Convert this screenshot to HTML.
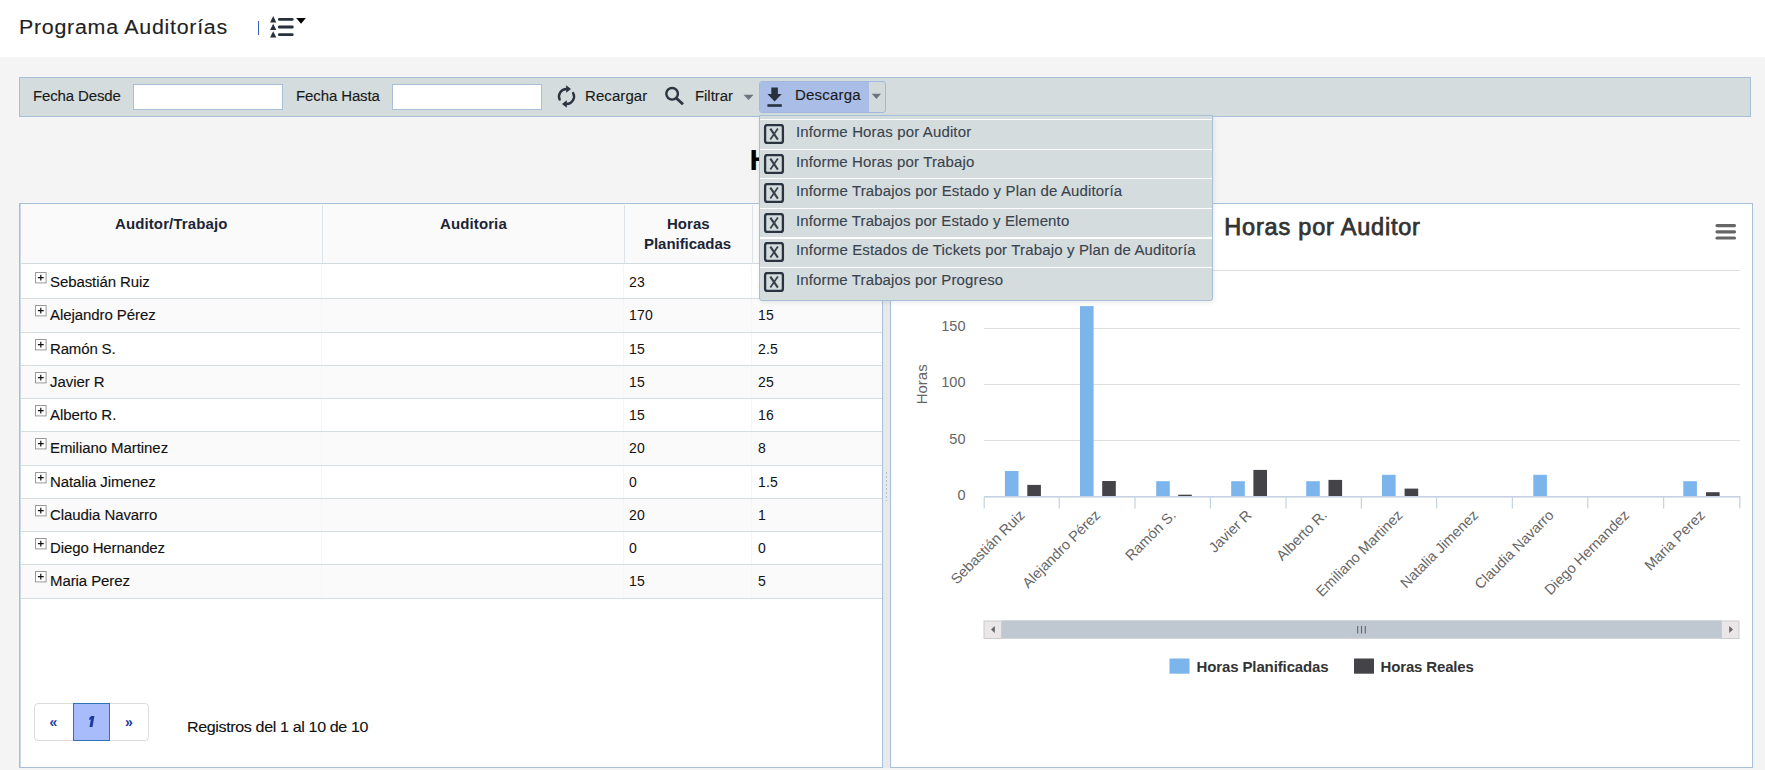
<!DOCTYPE html><html><head><meta charset="utf-8"><title>Programa Auditorías</title><style>
*{box-sizing:border-box}
html,body{margin:0;padding:0}
body{width:1765px;height:770px;overflow:hidden;background:#f4f4f4;font-family:"Liberation Sans", sans-serif;position:relative}
.a{position:absolute;white-space:nowrap}
.t{position:absolute;white-space:nowrap;line-height:1}
</style></head><body>
<div class="a" style="left:0;top:0;width:1765px;height:57px;background:#fff"></div>
<div class="t" style="left:19px;top:16.87px;font-size:20px;color:#222;font-weight:400;letter-spacing:0.681px;transform:scaleX(1.07);transform-origin:0 0;-webkit-text-stroke:0.12px currentColor;">Programa Auditorías</div>
<div class="a" style="left:257.5px;top:21px;width:1.6px;height:14px;background:#3461b8"></div>
<svg class="a" style="left:268px;top:14px" width="40" height="26" viewBox="0 0 40 26">
<g fill="#27313e">
<path d="M2.1 8.5 L5.2 2.1 L8.3 8.5 Z"/><path d="M2.1 16 L5.2 9.7 L8.3 16 Z"/><path d="M2.1 23.6 L5.2 17.3 L8.3 23.6 Z"/>
<rect x="10" y="4.0" width="15.6" height="2.8" rx="1.2"/><rect x="10" y="11.6" width="15.6" height="2.8" rx="1.2"/><rect x="10" y="19.2" width="15.6" height="2.8" rx="1.2"/>
</g><path d="M28.2 4 L37.9 4 L33.05 9.8 Z" fill="#000"/></svg>
<div class="a" style="left:19px;top:77px;width:1732px;height:40px;background:#d4dcdd;border:1px solid #a7c0da"></div>
<div class="t" style="left:33px;top:89.15px;font-size:14px;color:#1a1a1a;font-weight:400;letter-spacing:-0.121px;transform:scaleX(1.07);transform-origin:0 0;-webkit-text-stroke:0.12px currentColor;">Fecha Desde</div>
<div class="a" style="left:133px;top:84px;width:150px;height:26px;background:#fff;border:1px solid #a7c0da"></div>
<div class="t" style="left:296px;top:89.15px;font-size:14px;color:#1a1a1a;font-weight:400;letter-spacing:-0.098px;transform:scaleX(1.07);transform-origin:0 0;-webkit-text-stroke:0.12px currentColor;">Fecha Hasta</div>
<div class="a" style="left:392px;top:84px;width:150px;height:26px;background:#fff;border:1px solid #a7c0da"></div>
<svg class="a" style="left:554px;top:84px" width="26" height="26" viewBox="0 0 26 26">
<g fill="none" stroke="#2b3542" stroke-width="2.4" stroke-linecap="round">
<path d="M5.65 15.55 A7.5 7.5 0 0 1 12.6 5.0"/><path d="M19.12 8.98 A7.5 7.5 0 0 1 12.4 20.0"/></g>
<path d="M12.2 1.3 L17.0 4.9 L12.2 8.7 Z" fill="#2b3542"/><path d="M12.8 16.3 L8.0 20.1 L12.8 23.7 Z" fill="#2b3542"/>
</svg>
<div class="t" style="left:585px;top:89.15px;font-size:14px;color:#1a1a1a;font-weight:400;letter-spacing:0.090px;transform:scaleX(1.07);transform-origin:0 0;-webkit-text-stroke:0.12px currentColor;">Recargar</div>
<svg class="a" style="left:663px;top:85px" width="24" height="24" viewBox="0 0 24 24">
<circle cx="9.1" cy="8.8" r="5.8" fill="none" stroke="#2b3542" stroke-width="2.4"/>
<path d="M13.4 13.2 L20.0 19.3" stroke="#2b3542" stroke-width="2.8" stroke-linecap="butt"/></svg>
<div class="t" style="left:694.5px;top:89.15px;font-size:14px;color:#1a1a1a;font-weight:400;letter-spacing:-0.054px;transform:scaleX(1.07);transform-origin:0 0;-webkit-text-stroke:0.12px currentColor;">Filtrar</div>
<svg class="a" style="left:743px;top:94px" width="11" height="7" viewBox="0 0 11 7"><path d="M0.5 0.8 L10.5 0.8 L5.5 6 Z" fill="#6b7580"/></svg>
<div class="a" style="left:759px;top:81px;width:127px;height:32px;background:#d2dadb;border:1px solid #a3b8de;border-radius:3px"></div>
<div class="a" style="left:760px;top:82px;width:109px;height:30px;background:#aabde6;border-radius:2px 0 0 2px"></div>
<svg class="a" style="left:765px;top:86px" width="20" height="22" viewBox="0 0 20 22">
<path d="M6.3 1.5 L12.9 1.5 L12.9 8.0 L16.8 8.0 L9.6 15.6 L2.4 8.0 L6.3 8.0 Z" fill="#28323f"/>
<rect x="2.4" y="18.2" width="14.4" height="2.6" fill="#28323f"/></svg>
<div class="t" style="left:795px;top:88.15px;font-size:14px;color:#1a1a1a;font-weight:400;letter-spacing:0.211px;transform:scaleX(1.07);transform-origin:0 0;-webkit-text-stroke:0.12px currentColor;">Descarga</div>
<svg class="a" style="left:871px;top:93px" width="11" height="7" viewBox="0 0 11 7"><path d="M0.8 0.8 L10 0.8 L5.4 6 Z" fill="#6b7580"/></svg>
<div class="t" style="left:749.5px;top:145.20px;font-size:30px;color:#000;font-weight:700;letter-spacing:0px;">H</div>
<div class="a" style="left:19px;top:203px;width:864px;height:565px;background:#fff;border:1px solid #a7c0da;box-shadow:inset 1px 0 0 #c9d7e6"></div>
<div class="a" style="left:21px;top:204px;width:861px;height:59px;background:#fafafa"></div>
<div class="a" style="left:21px;top:263px;width:861px;height:1px;background:#d3dcdf"></div>
<div class="a" style="left:21px;top:265px;width:861px;height:1px;background:#eef1f2"></div>
<div class="a" style="left:322px;top:205px;width:1px;height:58px;background:#dde3e6"></div>
<div class="a" style="left:624px;top:205px;width:1px;height:58px;background:#dde3e6"></div>
<div class="a" style="left:752px;top:205px;width:1px;height:58px;background:#dde3e6"></div>
<div class="t" style="left:115px;top:217.15px;font-size:14px;color:#1c2536;font-weight:700;letter-spacing:0.110px;transform:scaleX(1.07);transform-origin:0 0;">Auditor/Trabajo</div>
<div class="t" style="left:440px;top:217.15px;font-size:14px;color:#1c2536;font-weight:700;letter-spacing:0.114px;transform:scaleX(1.07);transform-origin:0 0;">Auditoria</div>
<div class="t" style="left:667px;top:217.15px;font-size:14px;color:#1c2536;font-weight:700;letter-spacing:0.041px;transform:scaleX(1.07);transform-origin:0 0;">Horas</div>
<div class="t" style="left:644px;top:237.15px;font-size:14px;color:#1c2536;font-weight:700;letter-spacing:-0.025px;transform:scaleX(1.07);transform-origin:0 0;">Planificadas</div>
<div class="t" style="left:780px;top:217.15px;font-size:14px;color:#1c2536;font-weight:700;letter-spacing:0.6px;">Horas</div>
<div class="t" style="left:780px;top:237.15px;font-size:14px;color:#1c2536;font-weight:700;letter-spacing:0.45px;">Reales</div>
<div class="a" style="left:21px;top:265px;width:861px;height:34px;background:#ffffff"></div>
<div class="a" style="left:321px;top:265px;width:1px;height:34px;background:#f5f6f6"></div>
<div class="a" style="left:623px;top:265px;width:1px;height:34px;background:#f5f6f6"></div>
<div class="a" style="left:751px;top:265px;width:1px;height:34px;background:#f5f6f6"></div>
<div class="a" style="left:21px;top:299px;width:861px;height:34px;background:#fafafa"></div>
<div class="a" style="left:321px;top:299px;width:1px;height:34px;background:#f5f6f6"></div>
<div class="a" style="left:623px;top:299px;width:1px;height:34px;background:#f5f6f6"></div>
<div class="a" style="left:751px;top:299px;width:1px;height:34px;background:#f5f6f6"></div>
<div class="a" style="left:21px;top:333px;width:861px;height:33px;background:#ffffff"></div>
<div class="a" style="left:321px;top:333px;width:1px;height:33px;background:#f5f6f6"></div>
<div class="a" style="left:623px;top:333px;width:1px;height:33px;background:#f5f6f6"></div>
<div class="a" style="left:751px;top:333px;width:1px;height:33px;background:#f5f6f6"></div>
<div class="a" style="left:21px;top:366px;width:861px;height:33px;background:#fafafa"></div>
<div class="a" style="left:321px;top:366px;width:1px;height:33px;background:#f5f6f6"></div>
<div class="a" style="left:623px;top:366px;width:1px;height:33px;background:#f5f6f6"></div>
<div class="a" style="left:751px;top:366px;width:1px;height:33px;background:#f5f6f6"></div>
<div class="a" style="left:21px;top:399px;width:861px;height:33px;background:#ffffff"></div>
<div class="a" style="left:321px;top:399px;width:1px;height:33px;background:#f5f6f6"></div>
<div class="a" style="left:623px;top:399px;width:1px;height:33px;background:#f5f6f6"></div>
<div class="a" style="left:751px;top:399px;width:1px;height:33px;background:#f5f6f6"></div>
<div class="a" style="left:21px;top:432px;width:861px;height:34px;background:#fafafa"></div>
<div class="a" style="left:321px;top:432px;width:1px;height:34px;background:#f5f6f6"></div>
<div class="a" style="left:623px;top:432px;width:1px;height:34px;background:#f5f6f6"></div>
<div class="a" style="left:751px;top:432px;width:1px;height:34px;background:#f5f6f6"></div>
<div class="a" style="left:21px;top:466px;width:861px;height:33px;background:#ffffff"></div>
<div class="a" style="left:321px;top:466px;width:1px;height:33px;background:#f5f6f6"></div>
<div class="a" style="left:623px;top:466px;width:1px;height:33px;background:#f5f6f6"></div>
<div class="a" style="left:751px;top:466px;width:1px;height:33px;background:#f5f6f6"></div>
<div class="a" style="left:21px;top:499px;width:861px;height:33px;background:#fafafa"></div>
<div class="a" style="left:321px;top:499px;width:1px;height:33px;background:#f5f6f6"></div>
<div class="a" style="left:623px;top:499px;width:1px;height:33px;background:#f5f6f6"></div>
<div class="a" style="left:751px;top:499px;width:1px;height:33px;background:#f5f6f6"></div>
<div class="a" style="left:21px;top:532px;width:861px;height:33px;background:#ffffff"></div>
<div class="a" style="left:321px;top:532px;width:1px;height:33px;background:#f5f6f6"></div>
<div class="a" style="left:623px;top:532px;width:1px;height:33px;background:#f5f6f6"></div>
<div class="a" style="left:751px;top:532px;width:1px;height:33px;background:#f5f6f6"></div>
<div class="a" style="left:21px;top:565px;width:861px;height:34px;background:#fafafa"></div>
<div class="a" style="left:321px;top:565px;width:1px;height:34px;background:#f5f6f6"></div>
<div class="a" style="left:623px;top:565px;width:1px;height:34px;background:#f5f6f6"></div>
<div class="a" style="left:751px;top:565px;width:1px;height:34px;background:#f5f6f6"></div>
<div class="a" style="left:21px;top:298px;width:861px;height:1px;background:#d5dde1"></div>
<div class="a" style="left:21px;top:332px;width:861px;height:1px;background:#d5dde1"></div>
<div class="a" style="left:21px;top:365px;width:861px;height:1px;background:#d5dde1"></div>
<div class="a" style="left:21px;top:398px;width:861px;height:1px;background:#d5dde1"></div>
<div class="a" style="left:21px;top:431px;width:861px;height:1px;background:#d5dde1"></div>
<div class="a" style="left:21px;top:465px;width:861px;height:1px;background:#d5dde1"></div>
<div class="a" style="left:21px;top:498px;width:861px;height:1px;background:#d5dde1"></div>
<div class="a" style="left:21px;top:531px;width:861px;height:1px;background:#d5dde1"></div>
<div class="a" style="left:21px;top:564px;width:861px;height:1px;background:#d5dde1"></div>
<div class="a" style="left:21px;top:598px;width:861px;height:1px;background:#d5dde1"></div>
<svg class="a" style="left:35px;top:272.2px" width="12" height="12" viewBox="0 0 12 12"><rect x="0.5" y="0.5" width="10.6" height="10.4" fill="#fff" stroke="#999"/><path d="M2.9 5.7 H8.7 M5.8 2.8 V8.6" stroke="#111" stroke-width="1.2"/></svg>
<div class="t" style="left:50px;top:274.95px;font-size:14px;color:#111;font-weight:400;letter-spacing:-0.066px;transform:scaleX(1.07);transform-origin:0 0;-webkit-text-stroke:0.12px currentColor;">Sebastián Ruiz</div>
<div class="t" style="left:629px;top:274.95px;font-size:14px;color:#111;font-weight:400;letter-spacing:0.2px;">23</div>
<div class="t" style="left:758px;top:274.95px;font-size:14px;color:#111;font-weight:400;letter-spacing:0.2px;">10</div>
<svg class="a" style="left:35px;top:305.2px" width="12" height="12" viewBox="0 0 12 12"><rect x="0.5" y="0.5" width="10.6" height="10.4" fill="#fff" stroke="#999"/><path d="M2.9 5.7 H8.7 M5.8 2.8 V8.6" stroke="#111" stroke-width="1.2"/></svg>
<div class="t" style="left:50px;top:307.95px;font-size:14px;color:#111;font-weight:400;letter-spacing:-0.061px;transform:scaleX(1.07);transform-origin:0 0;-webkit-text-stroke:0.12px currentColor;">Alejandro Pérez</div>
<div class="t" style="left:629px;top:307.95px;font-size:14px;color:#111;font-weight:400;letter-spacing:0.2px;">170</div>
<div class="t" style="left:758px;top:307.95px;font-size:14px;color:#111;font-weight:400;letter-spacing:0.2px;">15</div>
<svg class="a" style="left:35px;top:339.2px" width="12" height="12" viewBox="0 0 12 12"><rect x="0.5" y="0.5" width="10.6" height="10.4" fill="#fff" stroke="#999"/><path d="M2.9 5.7 H8.7 M5.8 2.8 V8.6" stroke="#111" stroke-width="1.2"/></svg>
<div class="t" style="left:50px;top:341.95px;font-size:14px;color:#111;font-weight:400;letter-spacing:-0.135px;transform:scaleX(1.07);transform-origin:0 0;-webkit-text-stroke:0.12px currentColor;">Ramón S.</div>
<div class="t" style="left:629px;top:341.95px;font-size:14px;color:#111;font-weight:400;letter-spacing:0.2px;">15</div>
<div class="t" style="left:758px;top:341.95px;font-size:14px;color:#111;font-weight:400;letter-spacing:0.2px;">2.5</div>
<svg class="a" style="left:35px;top:372.2px" width="12" height="12" viewBox="0 0 12 12"><rect x="0.5" y="0.5" width="10.6" height="10.4" fill="#fff" stroke="#999"/><path d="M2.9 5.7 H8.7 M5.8 2.8 V8.6" stroke="#111" stroke-width="1.2"/></svg>
<div class="t" style="left:50px;top:374.95px;font-size:14px;color:#111;font-weight:400;letter-spacing:-0.046px;transform:scaleX(1.07);transform-origin:0 0;-webkit-text-stroke:0.12px currentColor;">Javier R</div>
<div class="t" style="left:629px;top:374.95px;font-size:14px;color:#111;font-weight:400;letter-spacing:0.2px;">15</div>
<div class="t" style="left:758px;top:374.95px;font-size:14px;color:#111;font-weight:400;letter-spacing:0.2px;">25</div>
<svg class="a" style="left:35px;top:405.2px" width="12" height="12" viewBox="0 0 12 12"><rect x="0.5" y="0.5" width="10.6" height="10.4" fill="#fff" stroke="#999"/><path d="M2.9 5.7 H8.7 M5.8 2.8 V8.6" stroke="#111" stroke-width="1.2"/></svg>
<div class="t" style="left:50px;top:407.95px;font-size:14px;color:#111;font-weight:400;letter-spacing:-0.033px;transform:scaleX(1.07);transform-origin:0 0;-webkit-text-stroke:0.12px currentColor;">Alberto R.</div>
<div class="t" style="left:629px;top:407.95px;font-size:14px;color:#111;font-weight:400;letter-spacing:0.2px;">15</div>
<div class="t" style="left:758px;top:407.95px;font-size:14px;color:#111;font-weight:400;letter-spacing:0.2px;">16</div>
<svg class="a" style="left:35px;top:438.2px" width="12" height="12" viewBox="0 0 12 12"><rect x="0.5" y="0.5" width="10.6" height="10.4" fill="#fff" stroke="#999"/><path d="M2.9 5.7 H8.7 M5.8 2.8 V8.6" stroke="#111" stroke-width="1.2"/></svg>
<div class="t" style="left:50px;top:440.95px;font-size:14px;color:#111;font-weight:400;letter-spacing:-0.054px;transform:scaleX(1.07);transform-origin:0 0;-webkit-text-stroke:0.12px currentColor;">Emiliano Martinez</div>
<div class="t" style="left:629px;top:440.95px;font-size:14px;color:#111;font-weight:400;letter-spacing:0.2px;">20</div>
<div class="t" style="left:758px;top:440.95px;font-size:14px;color:#111;font-weight:400;letter-spacing:0.2px;">8</div>
<svg class="a" style="left:35px;top:472.2px" width="12" height="12" viewBox="0 0 12 12"><rect x="0.5" y="0.5" width="10.6" height="10.4" fill="#fff" stroke="#999"/><path d="M2.9 5.7 H8.7 M5.8 2.8 V8.6" stroke="#111" stroke-width="1.2"/></svg>
<div class="t" style="left:50px;top:474.95px;font-size:14px;color:#111;font-weight:400;letter-spacing:-0.061px;transform:scaleX(1.07);transform-origin:0 0;-webkit-text-stroke:0.12px currentColor;">Natalia Jimenez</div>
<div class="t" style="left:629px;top:474.95px;font-size:14px;color:#111;font-weight:400;letter-spacing:0.2px;">0</div>
<div class="t" style="left:758px;top:474.95px;font-size:14px;color:#111;font-weight:400;letter-spacing:0.2px;">1.5</div>
<svg class="a" style="left:35px;top:505.2px" width="12" height="12" viewBox="0 0 12 12"><rect x="0.5" y="0.5" width="10.6" height="10.4" fill="#fff" stroke="#999"/><path d="M2.9 5.7 H8.7 M5.8 2.8 V8.6" stroke="#111" stroke-width="1.2"/></svg>
<div class="t" style="left:50px;top:507.95px;font-size:14px;color:#111;font-weight:400;letter-spacing:-0.067px;transform:scaleX(1.07);transform-origin:0 0;-webkit-text-stroke:0.12px currentColor;">Claudia Navarro</div>
<div class="t" style="left:629px;top:507.95px;font-size:14px;color:#111;font-weight:400;letter-spacing:0.2px;">20</div>
<div class="t" style="left:758px;top:507.95px;font-size:14px;color:#111;font-weight:400;letter-spacing:0.2px;">1</div>
<svg class="a" style="left:35px;top:538.2px" width="12" height="12" viewBox="0 0 12 12"><rect x="0.5" y="0.5" width="10.6" height="10.4" fill="#fff" stroke="#999"/><path d="M2.9 5.7 H8.7 M5.8 2.8 V8.6" stroke="#111" stroke-width="1.2"/></svg>
<div class="t" style="left:50px;top:540.95px;font-size:14px;color:#111;font-weight:400;letter-spacing:-0.101px;transform:scaleX(1.07);transform-origin:0 0;-webkit-text-stroke:0.12px currentColor;">Diego Hernandez</div>
<div class="t" style="left:629px;top:540.95px;font-size:14px;color:#111;font-weight:400;letter-spacing:0.2px;">0</div>
<div class="t" style="left:758px;top:540.95px;font-size:14px;color:#111;font-weight:400;letter-spacing:0.2px;">0</div>
<svg class="a" style="left:35px;top:571.2px" width="12" height="12" viewBox="0 0 12 12"><rect x="0.5" y="0.5" width="10.6" height="10.4" fill="#fff" stroke="#999"/><path d="M2.9 5.7 H8.7 M5.8 2.8 V8.6" stroke="#111" stroke-width="1.2"/></svg>
<div class="t" style="left:50px;top:573.95px;font-size:14px;color:#111;font-weight:400;letter-spacing:-0.075px;transform:scaleX(1.07);transform-origin:0 0;-webkit-text-stroke:0.12px currentColor;">Maria Perez</div>
<div class="t" style="left:629px;top:573.95px;font-size:14px;color:#111;font-weight:400;letter-spacing:0.2px;">15</div>
<div class="t" style="left:758px;top:573.95px;font-size:14px;color:#111;font-weight:400;letter-spacing:0.2px;">5</div>
<div class="a" style="left:34px;top:703px;width:115px;height:38px;background:#fff;border:1px solid #dcdcdc;border-radius:4px"></div>
<div class="a" style="left:73px;top:703px;width:37px;height:38px;background:#a8bcfc;border:1.5px solid #2d74b6"></div>
<div class="t" style="left:49.5px;top:715.15px;font-size:14px;color:#1b3c9e;font-weight:700;letter-spacing:0px;">«</div>
<svg class="a" style="left:0;top:700px" width="200" height="40" viewBox="0 700 200 40"><path d="M91.2 716.1 L94.4 716.1 L92.5 727 L89.5 727 L90.9 719.5 L89.1 719.9 L89.5 717.5 Z" fill="#1b3c9e"/></svg>
<div class="t" style="left:125px;top:715.15px;font-size:14px;color:#1b3c9e;font-weight:700;letter-spacing:0px;">»</div>
<div class="t" style="left:187px;top:719.30px;font-size:15px;color:#111;font-weight:400;letter-spacing:-0.339px;transform:scaleX(1.07);transform-origin:0 0;-webkit-text-stroke:0.12px currentColor;">Registros del 1 al 10 de 10</div>
<div class="a" style="left:883px;top:203px;width:7px;height:565px;background:#e9e9e9"></div>
<div class="a" style="left:886px;top:472px;width:1px;height:29px;background:repeating-linear-gradient(#a8bcd4 0 2px,transparent 2px 4px)"></div>
<div class="a" style="left:890px;top:203px;width:863px;height:565px;background:#fff;border:1px solid #a7c0da"></div>
<svg class="a" style="left:0;top:0" width="1765" height="770" viewBox="0 0 1765 770">
<g font-family='"Liberation Sans", sans-serif'>
<text x="1322.5" y="235.4" text-anchor="middle" font-size="23.5" font-weight="400" fill="#333" stroke="#333" stroke-width="0.75" letter-spacing="0.8">Horas por Auditor</text>
<g stroke="#666" stroke-width="3.2" stroke-linecap="round"><path d="M1717 225.6H1734.5M1717 231.8H1734.5M1717 238H1734.5"/></g>
<rect x="984" y="270" width="756" height="1" fill="#dedede"/>
<rect x="984" y="328" width="756" height="1" fill="#dedede"/>
<rect x="984" y="384" width="756" height="1" fill="#dedede"/>
<rect x="984" y="440" width="756" height="1" fill="#dedede"/>
<text x="965.5" y="331.09999999999997" text-anchor="end" font-size="14.5" fill="#666">150</text>
<text x="965.5" y="387.4" text-anchor="end" font-size="14.5" fill="#666">100</text>
<text x="965.5" y="443.7" text-anchor="end" font-size="14.5" fill="#666">50</text>
<text x="965.5" y="499.7" text-anchor="end" font-size="14.5" fill="#666">0</text>
<text transform="translate(927.4 384.3) rotate(-90)" text-anchor="middle" font-size="15" fill="#666">Horas</text>
<rect x="1004.9" y="471" width="13.6" height="25.2" fill="#7cb5ec"/>
<rect x="1027.3" y="484.9" width="13.6" height="11.3" fill="#434348"/>
<rect x="1080.0" y="306.1" width="13.6" height="190.1" fill="#7cb5ec"/>
<rect x="1102.2" y="481" width="13.6" height="15.2" fill="#434348"/>
<rect x="1156.2" y="481.2" width="13.6" height="15.0" fill="#7cb5ec"/>
<rect x="1178.2" y="494.7" width="13.6" height="1.5" fill="#434348"/>
<rect x="1231.2" y="481.2" width="13.6" height="15.0" fill="#7cb5ec"/>
<rect x="1253.4" y="469.9" width="13.6" height="26.3" fill="#434348"/>
<rect x="1306.2" y="481.2" width="13.6" height="15.0" fill="#7cb5ec"/>
<rect x="1328.5" y="479.9" width="13.6" height="16.3" fill="#434348"/>
<rect x="1382.0" y="474.8" width="13.6" height="21.4" fill="#7cb5ec"/>
<rect x="1404.6" y="488.6" width="13.6" height="7.6" fill="#434348"/>
<rect x="1533.3" y="474.8" width="13.6" height="21.4" fill="#7cb5ec"/>
<rect x="1683.3" y="481.2" width="13.6" height="15.0" fill="#7cb5ec"/>
<rect x="1706.0" y="492.2" width="13.6" height="4.0" fill="#434348"/>
<rect x="984" y="496" width="756.5" height="1.6" fill="#c4d2e2"/>
<rect x="983.6" y="497" width="1.2" height="11.5" fill="#c4d2e2"/>
<rect x="1058.6" y="497" width="1.2" height="11.5" fill="#c4d2e2"/>
<rect x="1134.4" y="497" width="1.2" height="11.5" fill="#c4d2e2"/>
<rect x="1209.8" y="497" width="1.2" height="11.5" fill="#c4d2e2"/>
<rect x="1285.4" y="497" width="1.2" height="11.5" fill="#c4d2e2"/>
<rect x="1360.8" y="497" width="1.2" height="11.5" fill="#c4d2e2"/>
<rect x="1436.0" y="497" width="1.2" height="11.5" fill="#c4d2e2"/>
<rect x="1511.8" y="497" width="1.2" height="11.5" fill="#c4d2e2"/>
<rect x="1587.2" y="497" width="1.2" height="11.5" fill="#c4d2e2"/>
<rect x="1663.0" y="497" width="1.2" height="11.5" fill="#c4d2e2"/>
<rect x="1739.2" y="497" width="1.2" height="11.5" fill="#c4d2e2"/>
<text transform="translate(1025.6 516) rotate(-45)" text-anchor="end" font-size="14.5" fill="#666">Sebastián Ruiz</text>
<text transform="translate(1101.2 516) rotate(-45)" text-anchor="end" font-size="14.5" fill="#666">Alejandro Pérez</text>
<text transform="translate(1176.8 516) rotate(-45)" text-anchor="end" font-size="14.5" fill="#666">Ramón S.</text>
<text transform="translate(1252.3 516) rotate(-45)" text-anchor="end" font-size="14.5" fill="#666">Javier R</text>
<text transform="translate(1327.9 516) rotate(-45)" text-anchor="end" font-size="14.5" fill="#666">Alberto R.</text>
<text transform="translate(1403.5 516) rotate(-45)" text-anchor="end" font-size="14.5" fill="#666">Emiliano Martinez</text>
<text transform="translate(1479.1 516) rotate(-45)" text-anchor="end" font-size="14.5" fill="#666">Natalia Jimenez</text>
<text transform="translate(1554.7 516) rotate(-45)" text-anchor="end" font-size="14.5" fill="#666">Claudia Navarro</text>
<text transform="translate(1630.2 516) rotate(-45)" text-anchor="end" font-size="14.5" fill="#666">Diego Hernandez</text>
<text transform="translate(1705.8 516) rotate(-45)" text-anchor="end" font-size="14.5" fill="#666">Maria Perez</text>
<rect x="1002" y="620.3" width="719.5" height="18.4" fill="#bfc7d1"/>
<rect x="984" y="621" width="17.5" height="17.5" fill="#ebe7e8" stroke="#cccccc" stroke-width="1"/>
<rect x="1721.5" y="621" width="17.5" height="17.5" fill="#ebe7e8" stroke="#cccccc" stroke-width="1"/>
<path d="M991 629.5 L994.8 626 L994.8 633 Z" fill="#666"/>
<path d="M1733 629.5 L1729.2 626 L1729.2 633 Z" fill="#666"/>
<g stroke="#666" stroke-width="1.1"><path d="M1357.7 626V633.6M1361.5 626V633.6M1365.3 626V633.6"/></g>
<rect x="1169.5" y="658.5" width="20" height="15.2" fill="#7cb5ec"/>
<text x="1196.5" y="672.2" font-size="15" font-weight="700" fill="#333" letter-spacing="-0.12">Horas Planificadas</text>
<rect x="1354" y="658.5" width="20" height="15.2" fill="#434348"/>
<text x="1380.5" y="672.2" font-size="15" font-weight="700" fill="#333" letter-spacing="-0.15">Horas Reales</text>
</g></svg>
<div class="a" style="left:759px;top:115px;width:454px;height:186px;background:#d4dcdd;border:1px solid #a7c0da;border-radius:0 0 3px 3px;box-shadow:1px 2px 4px rgba(0,0,0,0.08)"></div>
<div class="a" style="left:760px;top:118.8px;width:452px;height:1.5px;background:#fff"></div>
<svg class="a" style="left:763px;top:124.0px" width="22" height="22" viewBox="0 0 22 22"><rect x="2.1" y="1.1" width="17.8" height="17.8" rx="2.2" fill="none" stroke="#2a3440" stroke-width="2.3"/><path d="M7.3 4.6 L14.9 15.6" stroke="#36404b" stroke-width="2.1"/><path d="M14.9 4.6 L7.3 15.6" stroke="#36404b" stroke-width="1.7"/></svg>
<div class="t" style="left:795.5px;top:124.85px;font-size:14px;color:#3a434e;font-weight:400;letter-spacing:0.141px;transform:scaleX(1.07);transform-origin:0 0;-webkit-text-stroke:0.12px currentColor;">Informe Horas por Auditor</div>
<div class="a" style="left:760px;top:148.8px;width:452px;height:1.5px;background:#fff"></div>
<svg class="a" style="left:763px;top:154.0px" width="22" height="22" viewBox="0 0 22 22"><rect x="2.1" y="1.1" width="17.8" height="17.8" rx="2.2" fill="none" stroke="#2a3440" stroke-width="2.3"/><path d="M7.3 4.6 L14.9 15.6" stroke="#36404b" stroke-width="2.1"/><path d="M14.9 4.6 L7.3 15.6" stroke="#36404b" stroke-width="1.7"/></svg>
<div class="t" style="left:795.5px;top:154.85px;font-size:14px;color:#3a434e;font-weight:400;letter-spacing:0.133px;transform:scaleX(1.07);transform-origin:0 0;-webkit-text-stroke:0.12px currentColor;">Informe Horas por Trabajo</div>
<div class="a" style="left:760px;top:177.9px;width:452px;height:1.5px;background:#fff"></div>
<svg class="a" style="left:763px;top:183.1px" width="22" height="22" viewBox="0 0 22 22"><rect x="2.1" y="1.1" width="17.8" height="17.8" rx="2.2" fill="none" stroke="#2a3440" stroke-width="2.3"/><path d="M7.3 4.6 L14.9 15.6" stroke="#36404b" stroke-width="2.1"/><path d="M14.9 4.6 L7.3 15.6" stroke="#36404b" stroke-width="1.7"/></svg>
<div class="t" style="left:795.5px;top:183.95px;font-size:14px;color:#3a434e;font-weight:400;letter-spacing:0.146px;transform:scaleX(1.07);transform-origin:0 0;-webkit-text-stroke:0.12px currentColor;">Informe Trabajos por Estado y Plan de Auditoría</div>
<div class="a" style="left:760px;top:207.5px;width:452px;height:1.5px;background:#fff"></div>
<svg class="a" style="left:763px;top:212.7px" width="22" height="22" viewBox="0 0 22 22"><rect x="2.1" y="1.1" width="17.8" height="17.8" rx="2.2" fill="none" stroke="#2a3440" stroke-width="2.3"/><path d="M7.3 4.6 L14.9 15.6" stroke="#36404b" stroke-width="2.1"/><path d="M14.9 4.6 L7.3 15.6" stroke="#36404b" stroke-width="1.7"/></svg>
<div class="t" style="left:795.5px;top:213.55px;font-size:14px;color:#3a434e;font-weight:400;letter-spacing:0.129px;transform:scaleX(1.07);transform-origin:0 0;-webkit-text-stroke:0.12px currentColor;">Informe Trabajos por Estado y Elemento</div>
<div class="a" style="left:760px;top:237.0px;width:452px;height:1.5px;background:#fff"></div>
<svg class="a" style="left:763px;top:242.2px" width="22" height="22" viewBox="0 0 22 22"><rect x="2.1" y="1.1" width="17.8" height="17.8" rx="2.2" fill="none" stroke="#2a3440" stroke-width="2.3"/><path d="M7.3 4.6 L14.9 15.6" stroke="#36404b" stroke-width="2.1"/><path d="M14.9 4.6 L7.3 15.6" stroke="#36404b" stroke-width="1.7"/></svg>
<div class="t" style="left:795.5px;top:243.05px;font-size:14px;color:#3a434e;font-weight:400;letter-spacing:0.149px;transform:scaleX(1.07);transform-origin:0 0;-webkit-text-stroke:0.12px currentColor;">Informe Estados de Tickets por Trabajo y Plan de Auditoría</div>
<div class="a" style="left:760px;top:266.9px;width:452px;height:1.5px;background:#fff"></div>
<svg class="a" style="left:763px;top:272.1px" width="22" height="22" viewBox="0 0 22 22"><rect x="2.1" y="1.1" width="17.8" height="17.8" rx="2.2" fill="none" stroke="#2a3440" stroke-width="2.3"/><path d="M7.3 4.6 L14.9 15.6" stroke="#36404b" stroke-width="2.1"/><path d="M14.9 4.6 L7.3 15.6" stroke="#36404b" stroke-width="1.7"/></svg>
<div class="t" style="left:795.5px;top:272.95px;font-size:14px;color:#3a434e;font-weight:400;letter-spacing:0.132px;transform:scaleX(1.07);transform-origin:0 0;-webkit-text-stroke:0.12px currentColor;">Informe Trabajos por Progreso</div>
</body></html>
